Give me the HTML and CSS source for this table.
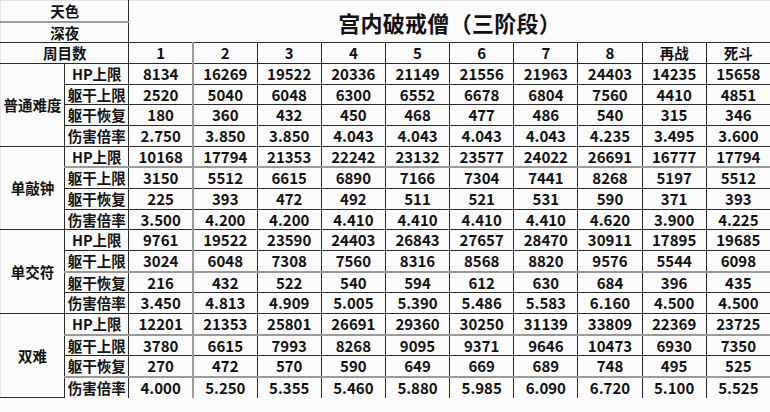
FILE: index.html
```html
<!DOCTYPE html>
<html lang="zh-CN">
<head>
<meta charset="utf-8">
<title>宫内破戒僧（三阶段）</title>
<link rel="stylesheet" href="styles.css">
</head>
<body>
<table class="sheet">
  <colgroup>
    <col><col><col class="c1"><col><col><col><col><col><col><col><col><col>
  </colgroup>
  <tbody>
    <tr class="soft first">
      <td colspan="2" class="label">天色</td>
      <td colspan="10" rowspan="2" class="title">宫内破戒僧（三阶段）</td>
    </tr>
    <tr><td colspan="2" class="label">深夜</td></tr>
    <tr>
      <td colspan="2" class="label">周目数</td>
      <td class="k">1</td><td>2</td><td>3</td><td>4</td><td>5</td><td>6</td><td>7</td><td>8</td><td class="label">再战</td><td class="label">死斗</td>
    </tr>

    <tr>
      <td rowspan="4" class="group">普通难度</td>
      <td class="label">HP上限</td>
      <td class="k">8134</td><td>16269</td><td>19522</td><td>20336</td><td>21149</td><td>21556</td><td>21963</td><td>24403</td><td>14235</td><td>15658</td>
    </tr>
    <tr>
      <td class="label">躯干上限</td>
      <td class="k">2520</td><td>5040</td><td>6048</td><td>6300</td><td>6552</td><td>6678</td><td>6804</td><td>7560</td><td>4410</td><td>4851</td>
    </tr>
    <tr>
      <td class="label">躯干恢复</td>
      <td class="k">180</td><td>360</td><td>432</td><td>450</td><td>468</td><td>477</td><td>486</td><td>540</td><td>315</td><td>346</td>
    </tr>
    <tr>
      <td class="label">伤害倍率</td>
      <td class="k">2.750</td><td>3.850</td><td>3.850</td><td>4.043</td><td>4.043</td><td>4.043</td><td>4.043</td><td>4.235</td><td>3.495</td><td>3.600</td>
    </tr>

    <tr class="soft">
      <td rowspan="4" class="group">单敲钟</td>
      <td class="label">HP上限</td>
      <td class="k">10168</td><td>17794</td><td>21353</td><td>22242</td><td>23132</td><td>23577</td><td>24022</td><td>26691</td><td>16777</td><td>17794</td>
    </tr>
    <tr>
      <td class="label">躯干上限</td>
      <td class="k">3150</td><td>5512</td><td>6615</td><td>6890</td><td>7166</td><td>7304</td><td>7441</td><td>8268</td><td>5197</td><td>5512</td>
    </tr>
    <tr>
      <td class="label">躯干恢复</td>
      <td class="k">225</td><td>393</td><td>472</td><td>492</td><td>511</td><td>521</td><td>531</td><td>590</td><td>371</td><td>393</td>
    </tr>
    <tr>
      <td class="label">伤害倍率</td>
      <td class="k">3.500</td><td>4.200</td><td>4.200</td><td>4.410</td><td>4.410</td><td>4.410</td><td>4.410</td><td>4.620</td><td>3.900</td><td>4.225</td>
    </tr>

    <tr>
      <td rowspan="4" class="group">单交符</td>
      <td class="label">HP上限</td>
      <td class="k">9761</td><td>19522</td><td>23590</td><td>24403</td><td>26843</td><td>27657</td><td>28470</td><td>30911</td><td>17895</td><td>19685</td>
    </tr>
    <tr class="soft">
      <td class="label">躯干上限</td>
      <td class="k">3024</td><td>6048</td><td>7308</td><td>7560</td><td>8316</td><td>8568</td><td>8820</td><td>9576</td><td>5544</td><td>6098</td>
    </tr>
    <tr>
      <td class="label">躯干恢复</td>
      <td class="k">216</td><td>432</td><td>522</td><td>540</td><td>594</td><td>612</td><td>630</td><td>684</td><td>396</td><td>435</td>
    </tr>
    <tr>
      <td class="label">伤害倍率</td>
      <td class="k">3.450</td><td>4.813</td><td>4.909</td><td>5.005</td><td>5.390</td><td>5.486</td><td>5.583</td><td>6.160</td><td>4.500</td><td>4.500</td>
    </tr>

    <tr class="soft">
      <td rowspan="4" class="group">双难</td>
      <td class="label">HP上限</td>
      <td class="k">12201</td><td>21353</td><td>25801</td><td>26691</td><td>29360</td><td>30250</td><td>31139</td><td>33809</td><td>22369</td><td>23725</td>
    </tr>
    <tr>
      <td class="label">躯干上限</td>
      <td class="k">3780</td><td>6615</td><td>7993</td><td>8268</td><td>9095</td><td>9371</td><td>9646</td><td>10473</td><td>6930</td><td>7350</td>
    </tr>
    <tr class="soft">
      <td class="label">躯干恢复</td>
      <td class="k">270</td><td>472</td><td>570</td><td>590</td><td>649</td><td>669</td><td>689</td><td>748</td><td>495</td><td>525</td>
    </tr>
    <tr class="last">
      <td class="label">伤害倍率</td>
      <td class="k">4.000</td><td>5.250</td><td>5.355</td><td>5.460</td><td>5.880</td><td>5.985</td><td>6.090</td><td>6.720</td><td>5.100</td><td>5.525</td>
    </tr>
  </tbody>
</table>
</body>
</html>
```

FILE: styles.css
```css
html, body {
  margin: 0;
  padding: 0;
  background: #fbfbfb;
}

.sheet {
  width: 771px;
  table-layout: fixed;
  border-collapse: collapse;
  font-family: "Noto Sans CJK SC", "Noto Sans", sans-serif;
  font-weight: 700;
  font-size: 15px;
  color: #111;
  background: #fbfbfb;
}

.sheet col {
  width: 64.17px;
}

.sheet td {
  border: 1px solid #2a2a2a;
  padding: 0;
  height: 19.68px;
  line-height: 16px;
  text-align: center;
  vertical-align: middle;
  white-space: nowrap;
  overflow: hidden;
}

.sheet tr.first td {
  border-top: 1px solid #e2e2e2;
}

.sheet tr td:first-child {
  border-left: 1px solid #e6e6e6;
}

.sheet tr.soft td {
  border-bottom: 2px solid #9a9a9a;
}

.sheet tr.soft td.group,
.sheet tr.soft td.title {
  border-bottom: 1px solid #2a2a2a;
}

.sheet td.k {
  border-right: 2px solid #9a9a9a;
}

.sheet td.title {
  font-size: 22px;
  letter-spacing: 0.3px;
}

.sheet td.label,
.sheet td.group {
  font-size: 14.5px;
}

.sheet tr.last td {
  border-bottom: none;
}
```
